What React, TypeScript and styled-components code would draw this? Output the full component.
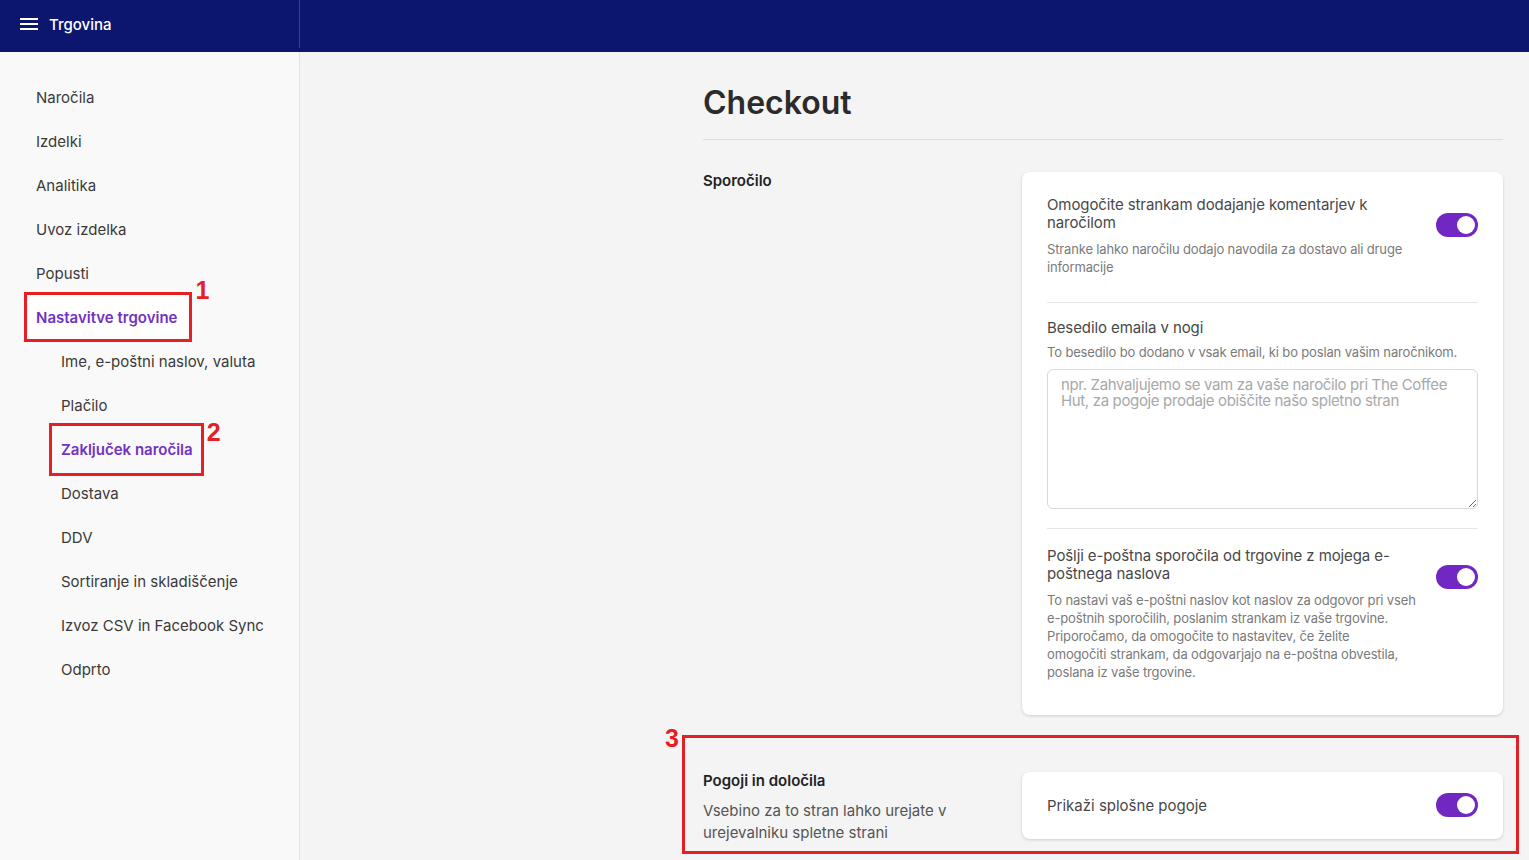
import React from "react"
import styled, { createGlobalStyle } from "styled-components"

const GlobalStyle = createGlobalStyle`
  html, body {
    margin: 0;
    padding: 0;
    height: 100%;
    overflow: hidden;
  }
  body {
    font-family: Inter, Roboto, "Liberation Sans", Arial, sans-serif;
    color: #333;
    background: #f4f4f4;
  }
  * {
    box-sizing: border-box;
  }
`

const Page = styled.div`
  display: flex;
  flex-direction: column;
  height: 860px;
`

const Topbar = styled.header`
  display: flex;
  height: 52px;
  flex-shrink: 0;
  background: #0d166f;
`

const Brand = styled.div`
  display: flex;
  align-items: center;
  gap: 11px;
  width: 300px;
  height: 48px;
  padding-left: 20px;
  border-right: 1px solid rgba(255, 255, 255, 0.18);
  color: #fff;
  font-size: 15px;
  font-weight: 500;
`

const Burger = styled.span`
  display: flex;
  flex-direction: column;
  gap: 3px;
  width: 18px;

  i {
    display: block;
    height: 2px;
    background: #fff;
  }
`

const Body = styled.div`
  display: flex;
  flex: 1;
  min-height: 0;
`

const Sidebar = styled.nav`
  width: 300px;
  flex-shrink: 0;
  padding-top: 23px;
  background: #f9f9f9;
  border-right: 1px solid #e2e2e2;
`

const NavRow = styled.div<{ $sub?: boolean }>`
  display: flex;
  height: 44px;
  align-items: center;
  padding-left: ${(p) => (p.$sub ? "53px" : "28px")};
`

const NavLink = styled.span<{ $active?: boolean; $sub?: boolean }>`
  position: relative;
  display: inline-flex;
  align-items: center;
  height: ${(p) => (p.$active && !p.$sub ? "44px" : "auto")};
  padding: 0 10px 0 8px;
  border-radius: 6px;
  background: ${(p) => (p.$active && !p.$sub ? "#fff" : "transparent")};
  color: ${(p) => (p.$active ? "#7131c1" : "#3a3a3a")};
  font-size: 15px;
  font-weight: ${(p) => (p.$active ? 600 : 400)};
  white-space: nowrap;
`

// red annotation frames drawn over the content
const Marker = styled.span<{ $inset: string }>`
  position: absolute;
  inset: ${(p) => p.$inset};
  border: 3px solid #e41f26;
  pointer-events: none;
`

const MarkerNumber = styled.span<{ $top: string; $left?: string; $right?: string }>`
  position: absolute;
  top: ${(p) => p.$top};
  ${(p) => (p.$left ? `left: ${p.$left};` : "")}
  ${(p) => (p.$right ? `right: ${p.$right};` : "")}
  color: #e41f26;
  font-family: "Liberation Sans", Arial, sans-serif;
  font-size: 25px;
  font-weight: 700;
  line-height: 1;
`

const Main = styled.main`
  flex: 1;
  display: flex;
  justify-content: flex-end;
  padding: 0 26px;
  overflow: hidden;
`

const Content = styled.div`
  width: 800px;
`

const Header = styled.div`
  padding: 31px 0 16px;
  border-bottom: 1px solid #dcdcdc;
`

const Title = styled.h1`
  margin: 0;
  font-size: 32px;
  line-height: 40px;
  font-weight: 600;
  color: #2b2b2b;
`

const Section = styled.section<{ $top: number }>`
  position: relative;
  display: grid;
  grid-template-columns: 319px 481px;
  align-items: start;
  margin-top: ${(p) => p.$top}px;
`

const Label = styled.div`
  padding-right: 56px;
`

const LabelTitle = styled.div`
  font-size: 15px;
  line-height: 18px;
  font-weight: 600;
  color: #222;
`

const LabelText = styled.div`
  margin-top: 10px;
  font-size: 15px;
  line-height: 22px;
  color: #555;
`

const Card = styled.div<{ $compact?: boolean }>`
  background: #fff;
  border-radius: 8px;
  box-shadow: 0 1px 3px rgba(0, 0, 0, 0.16);
  padding: ${(p) => (p.$compact ? "21px 25px 22px" : "8px 25px")};
`

const Item = styled.div<{ $pt?: number; $pb?: number; $last?: boolean }>`
  display: flex;
  gap: 20px;
  padding: ${(p) => p.$pt ?? 16}px 0 ${(p) => p.$pb ?? 26}px;
  border-bottom: ${(p) => (p.$last ? "none" : "1px solid #e6e6e6")};
`

const ItemBody = styled.div`
  flex: 1;
  min-width: 0;
`

const ItemTitle = styled.div`
  font-size: 15px;
  line-height: 18px;
  color: #484848;
  letter-spacing: -0.1px;
`

const ItemText = styled.div<{ $gap?: number }>`
  margin-top: ${(p) => p.$gap ?? 8}px;
  font-size: 13px;
  line-height: 18px;
  color: #7a7a7a;
  letter-spacing: -0.15px;
`

const FooterField = styled.textarea`
  display: block;
  width: 100%;
  height: 140px;
  margin-top: 8px;
  padding: 7px 13px;
  border: 1px solid #d9d9d9;
  border-radius: 6px;
  font-family: inherit;
  font-size: 15px;
  line-height: 16px;
  letter-spacing: -0.35px;
  color: #333;
  background: #fff;

  &::placeholder {
    color: #a8a8a8;
  }
`

const Row = styled.div`
  display: flex;
  align-items: center;
  justify-content: space-between;
  height: 24px;
  font-size: 15px;
  color: #484848;
`

const Toggle = styled.span<{ $offset?: number }>`
  position: relative;
  flex-shrink: 0;
  width: 42px;
  height: 24px;
  margin-top: ${(p) => p.$offset ?? 0}px;
  border-radius: 12px;
  background: #7127c2;

  &::after {
    content: "";
    position: absolute;
    top: 3px;
    right: 3px;
    width: 18px;
    height: 18px;
    border-radius: 50%;
    background: #fff;
  }
`

const topLinks = ["Naročila", "Izdelki", "Analitika", "Uvoz izdelka", "Popusti"]
const subLinks = [
  "Ime, e-poštni naslov, valuta",
  "Plačilo",
  "Zaključek naročila",
  "Dostava",
  "DDV",
  "Sortiranje in skladiščenje",
  "Izvoz CSV in Facebook Sync",
  "Odprto",
]

const App = () => {
  return (
    <Page>
      <GlobalStyle />
      <Topbar>
        <Brand>
          <Burger>
            <i />
            <i />
            <i />
          </Burger>
          Trgovina
        </Brand>
      </Topbar>
      <Body>
        <Sidebar>
          {topLinks.map((label) => (
            <NavRow key={label}>
              <NavLink>{label}</NavLink>
            </NavRow>
          ))}
          <NavRow>
            <NavLink $active>
              Nastavitve trgovine
              <Marker $inset="-3px -5px -3px -4px" />
              <MarkerNumber $top="-17px" $right="-22px">
                1
              </MarkerNumber>
            </NavLink>
          </NavRow>
          {subLinks.map((label) => {
            const active = label === "Zaključek naročila"
            return (
              <NavRow key={label} $sub>
                <NavLink $sub $active={active}>
                  {label}
                  {active && (
                    <>
                      <Marker $inset="-17px -1px -17px -4px" />
                      <MarkerNumber $top="-20px" $right="-18px">
                        2
                      </MarkerNumber>
                    </>
                  )}
                </NavLink>
              </NavRow>
            )
          })}
        </Sidebar>
        <Main>
          <Content>
            <Header>
              <Title>Checkout</Title>
            </Header>

            <Section $top={32}>
              <Label>
                <LabelTitle>Sporočilo</LabelTitle>
              </Label>
              <Card>
                <Item>
                  <ItemBody>
                    <ItemTitle>Omogočite strankam dodajanje komentarjev k naročilom</ItemTitle>
                    <ItemText>Stranke lahko naročilu dodajo navodila za dostavo ali druge informacije</ItemText>
                  </ItemBody>
                  <Toggle $offset={17} />
                </Item>
                <Item $pb={19}>
                  <ItemBody>
                    <ItemTitle>Besedilo emaila v nogi</ItemTitle>
                    <ItemText $gap={6}>To besedilo bo dodano v vsak email, ki bo poslan vašim naročnikom.</ItemText>
                    <FooterField placeholder="npr. Zahvaljujemo se vam za vaše naročilo pri The Coffee Hut, za pogoje prodaje obiščite našo spletno stran" />
                  </ItemBody>
                </Item>
                <Item $pt={18} $last>
                  <ItemBody>
                    <ItemTitle>Pošlji e-poštna sporočila od trgovine z mojega e-poštnega naslova</ItemTitle>
                    <ItemText>
                      To nastavi vaš e-poštni naslov kot naslov za odgovor pri vseh e-poštnih sporočilih, poslanim
                      strankam iz vaše trgovine. Priporočamo, da omogočite to nastavitev, če želite
                      <br />
                      omogočiti strankam, da odgovarjajo na e-poštna obvestila,
                      <br />
                      poslana iz vaše trgovine.
                    </ItemText>
                  </ItemBody>
                  <Toggle $offset={18} />
                </Item>
              </Card>
            </Section>

            <Section $top={57}>
              <Label>
                <LabelTitle>Pogoji in določila</LabelTitle>
                <LabelText>Vsebino za to stran lahko urejate v urejevalniku spletne strani</LabelText>
              </Label>
              <Card $compact>
                <Row>
                  Prikaži splošne pogoje
                  <Toggle />
                </Row>
              </Card>
              <Marker $inset="-37px -16px -10px -21px" />
              <MarkerNumber $top="-46px" $left="-38px">
                3
              </MarkerNumber>
            </Section>
          </Content>
        </Main>
      </Body>
    </Page>
  )
}

export default App
